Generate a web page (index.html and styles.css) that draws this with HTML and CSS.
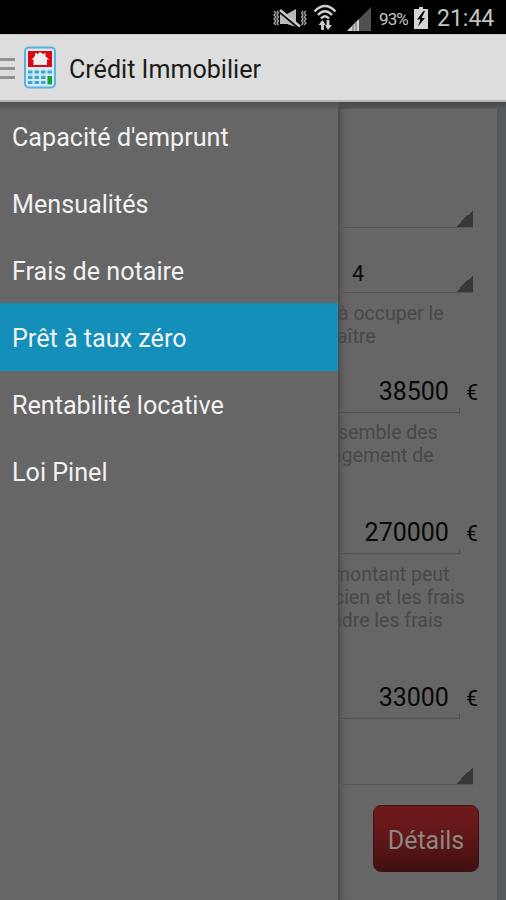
FILE: index.html
```
<!DOCTYPE html>
<html lang="fr">
<head>
    <meta charset="UTF-8">
    <meta name="viewport" content="width=device-width, initial-scale=1.0">
    <title>Crédit Immobilier</title>
    <link rel="stylesheet" href="styles.css">
</head>
<body>

    <div class="status-bar">
        <svg class="icon-mute" width="34" height="22" viewBox="0 0 34 22">
            <path d="M7 6h7l9-5v18l-9-3H7z" fill="#b9b9b9"/>
            <path d="M8 4l19 16" stroke="#000" stroke-width="4"/>
            <path d="M7 2l20 16.500" stroke="#c9c9c9" stroke-width="2.500"/>
            <path d="M1 3l2 2-2 2 2 2-2 2 2 2-2 2 2 2M4 3l1.500 2L4 7l1.500 2L4 11l1.500 2L4 15l1.500 2M30 3l-1.500 2L30 7l-1.500 2 1.500 2-1.500 2 1.500 2-1.500 2M33 3l-2 2 2 2-2 2 2 2-2 2 2 2-2 2" fill="none" stroke="#a5a5a5" stroke-width="1.300"/>
        </svg>
        <svg class="icon-wifi" width="24" height="27" viewBox="0 0 24 27">
            <path d="M1.500 7.500q10.500-11 21 0M5 11q7-7.500 14 0M8 14.500q4-4.500 8 0" fill="none" stroke="#cfcfcf" stroke-width="2.500"/>
            <path d="M9.500 26v-8M15 16v8" stroke="#cfcfcf" stroke-width="2.800"/>
            <path d="M5.500 21l4-5 3 5zM12 21l3 5 4-5z" fill="#cfcfcf"/>
        </svg>
        <svg class="icon-signal" width="24" height="24" viewBox="0 0 24 24">
            <path d="M0 24L24 0v24z" fill="#505050"/>
            <path d="M0 24L12 12v12z" fill="#d2d2d2"/>
            <path d="M6 17v7M9 14v10" stroke="#555" stroke-width="1"/>
        </svg>
        <span class="battery-level">93%</span>
        <svg class="icon-battery" width="14" height="22" viewBox="0 0 14 22">
            <path d="M5 0h4v2h5v20H0V2h5z" fill="#d4d4d4"/>
            <path d="M9.500 4L3 12.500h3.500L4 19.500l7-8.500H7.500L11 4z" fill="#000"/>
        </svg>
        <span class="clock">21:44</span>
    </div>

    <div class="action-bar">
        <div class="drawer-toggle">
            <span></span>
            <span></span>
            <span></span>
        </div>
        <svg class="app-icon" width="34" height="44" viewBox="0 0 34 44">
            <rect x="2" y="1.500" width="30" height="40" rx="4" fill="#d5e9f3" stroke="#5ab0de" stroke-width="2"/>
            <rect x="5" y="5" width="24" height="16" fill="#dc0710"/>
            <path d="M8.500 13.500L12 10V7h2v1.500L17 6l4 2.500V7h1.500v3.200l3.500 3.300h-2V19H10.500v-5.500z" fill="#eee"/>
            <path d="M5 26h24M5 31.300h18M5 36.500h18" stroke="#3ba7d8" stroke-width="3.200" stroke-dasharray="4.500 2"/>
            <rect x="24.500" y="30" width="4.500" height="8.500" fill="#14a237"/>
        </svg>
        <h1>Crédit Immobilier</h1>
    </div>

    <div class="main">
        <ul class="drawer">
            <li>Capacité d'emprunt</li>
            <li>Mensualités</li>
            <li>Frais de notaire</li>
            <li class="selected">Prêt à taux zéro</li>
            <li>Rentabilité locative</li>
            <li>Loi Pinel</li>
        </ul>

        <div class="content">
            <div class="card">
                <div class="spinner first"></div>
                <div class="spinner second">4</div>
                <div class="hint hint-family">
                    <p>à occuper le</p>
                    <p class="cut-a">aître</p>
                </div>
                <div class="field">
                    <span class="amount">38500</span>
                    <span class="unit">€</span>
                </div>
                <div class="hint hint-income">
                    <p>semble des</p>
                    <p class="cut-g">agement de</p>
                </div>
                <div class="field">
                    <span class="amount">270000</span>
                    <span class="unit">€</span>
                </div>
                <div class="hint hint-cost">
                    <p class="cut-m">montant peut</p>
                    <p class="cut-c">cien et les frais</p>
                    <p class="cut-n">ndre les frais</p>
                </div>
                <div class="field">
                    <span class="amount">33000</span>
                    <span class="unit">€</span>
                </div>
                <div class="spinner last"></div>
                <button class="details">Détails</button>
            </div>
        </div>
    </div>

</body>
</html>
```

FILE: styles.css
```
* {
    box-sizing: border-box;
}
body {
    display: flex;
    flex-direction: column;
    height: 900px;
    margin: 0;
    overflow: hidden;
    font-family: Roboto, sans-serif;
    background-color: #666;
}
.status-bar {
    display: flex;
    justify-content: flex-end;
    align-items: flex-start;
    height: 34px;
    padding-right: 13px;
    background-color: #000;
    color: #c4c4c4;
}
.icon-mute {
    margin: 8px 6px 0 0;
}
.icon-wifi {
    margin: 4px 10px 0 0;
}
.icon-signal {
    margin: 7px 8px 0 0;
}
.battery-level {
    width: 31px;
    margin: 7px 4px 0 0;
    font-size: 17px;
    line-height: 24px;
    letter-spacing: -0.9px;
}
.icon-battery {
    margin: 7px 9px 0 0;
}
.clock {
    width: 56px;
    margin-top: 5px;
    font-size: 23px;
    line-height: 28px;
    white-space: nowrap;
}
.action-bar {
    display: flex;
    align-items: center;
    height: 68px;
    background-color: #ddd;
    border-top: 1px solid #c8c8c8;
    border-bottom: 2px solid #b5b5b5;
}
.drawer-toggle {
    display: flex;
    flex-direction: column;
    gap: 6px;
    width: 15px;
    margin: 2px 8px 0 0;
}
.drawer-toggle span {
    height: 3px;
    background-color: #929292;
}
.app-icon {
    margin-right: 12px;
}
.action-bar h1 {
    margin: 4px 0 0;
    font-size: 25.1px;
    font-weight: 400;
    line-height: 32px;
    color: #1c1c1c;
}
.main {
    display: flex;
    flex: 1;
    background-image: linear-gradient(#505050, #666 9px);
}
.drawer {
    width: 338px;
    margin: 0;
    padding: 1px 0 0;
    list-style: none;
}
.drawer li {
    height: 67px;
    padding-left: 12px;
    font-size: 25.15px;
    line-height: 69px;
    color: #f2f2f2;
}
.drawer .selected {
    height: 68px;
    margin-top: -1px;
    line-height: 71px;
    background-color: #148fba;
}
.content {
    width: 168px;
    padding: 7px 8px 0 0;
    overflow: hidden;
    background: linear-gradient(to right, #4c4c4c, rgba(87, 90, 92, 0) 12px), linear-gradient(#454747, #575a5c 7px);
}
.card {
    height: 791px;
    padding-right: 19px;
    background: linear-gradient(to right, #4c4c4c, #606060 5px, #666 14px);
    border-right: 1px solid #535658;
}
.spinner {
    width: 135px;
    border-bottom: 1px solid #555;
    background: linear-gradient(135deg, transparent 50%, #383838 50%) no-repeat right bottom / 17px 17px;
    font-size: 21.5px;
    color: #0d0d0d;
}
.first {
    height: 119px;
}
.second {
    height: 65px;
    padding: 33px 0 0 14px;
    line-height: 26px;
}
.last {
    height: 66px;
}
.hint {
    padding-top: 9px;
    font-size: 19.5px;
    line-height: 23px;
    color: #484848;
    white-space: nowrap;
}
.hint p {
    margin: 0;
}
.hint-family {
    height: 76px;
}
.hint-income {
    height: 97px;
    padding-top: 8px;
}
.hint-cost {
    height: 121px;
}
.hint .cut-a {
    margin-left: -1px;
}
.hint .cut-g {
    margin-left: -7px;
}
.hint .cut-m {
    margin-left: -5px;
}
.hint .cut-c {
    margin-left: -4px;
}
.hint .cut-n {
    margin-left: -7px;
}
.field {
    display: flex;
    height: 44px;
}
.amount {
    width: 123px;
    padding: 1px 11px 0 0;
    border-bottom: 1px solid #505050;
    background: linear-gradient(#505050, #505050) no-repeat right bottom / 1px 4px;
    font-size: 25px;
    line-height: 44px;
    text-align: right;
    color: #080808;
}
.unit {
    margin-left: 6px;
    font-size: 21.5px;
    line-height: 47px;
    color: #080808;
}
.details {
    display: block;
    width: 106px;
    height: 67px;
    margin: 20px 0 0 35px;
    padding: 3px 0 0;
    border: 1px solid #3d1112;
    border-radius: 8px;
    background-image: linear-gradient(#701a1b, #621718 45%, #401011);
    font-family: inherit;
    font-size: 25px;
    color: #8f8683;
}
```
